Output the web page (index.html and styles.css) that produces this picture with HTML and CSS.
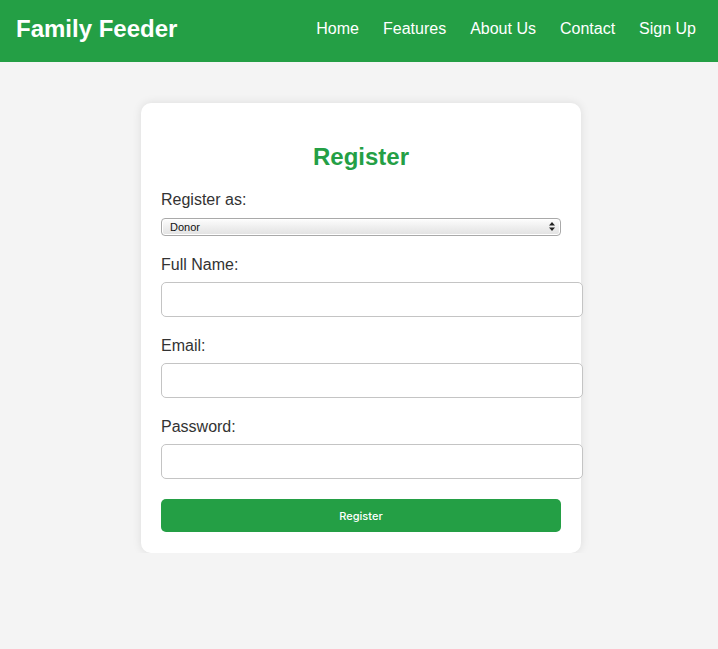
FILE: index.html
```html
<!DOCTYPE html>
<html lang="en">
<head>
<meta charset="utf-8">
<title>Family Feeder - Register</title>
<link rel="stylesheet" href="styles.css">
</head>
<body>
<header class="topbar">
  <div class="brand">Family Feeder</div>
  <nav class="nav">
    <a href="#">Home</a>
    <a href="#">Features</a>
    <a href="#">About Us</a>
    <a href="#">Contact</a>
    <a href="#">Sign Up</a>
  </nav>
</header>
<main class="page">
  <div class="card">
    <h2 class="title">Register</h2>
    <form class="form">
      <label class="label">Register as:</label>
      <div class="select-wrap">
        <select class="select">
          <option>Donor</option>
          <option>Recipient</option>
        </select>
        <svg class="select-arrows" width="6" height="9" viewBox="0 0 6 9"><path d="M0 3.5 L3 0 L6 3.5 Z M0 5.5 L3 9 L6 5.5 Z" fill="#222"/></svg>
      </div>
      <label class="label">Full Name:</label>
      <input class="input" type="text">
      <label class="label">Email:</label>
      <input class="input" type="email">
      <label class="label">Password:</label>
      <input class="input" type="password">
      <button class="btn" type="button">Register</button>
    </form>
  </div>
</main>
</body>
</html>
```
FILE: styles.css
```css
* { margin: 0; padding: 0; }
body {
  background: #f4f4f4;
  font-family: "Liberation Sans", Arial, sans-serif;
  color: #333;
}
.topbar {
  height: 62px;
  background: #249f45;
  display: flex;
  align-items: center;
  justify-content: space-between;
  padding: 0 22px 0 16px;
  box-sizing: border-box;
  color: #fff;
}
.brand {
  font-size: 24px;
  font-weight: bold;
  margin-top: -4px;
}
.nav {
  display: flex;
  gap: 24px;
  margin-top: -5px;
}
.nav a {
  color: #fff;
  text-decoration: none;
  font-size: 16px;
}
.page {
  display: flex;
  justify-content: center;
  padding: 41px 0 0 4px;
}
.card {
  width: 440px;
  box-sizing: border-box;
  background: #fff;
  border-radius: 10px;
  padding: 20px 20px 21px;
  box-shadow: 0 0 10px rgba(0,0,0,0.1);
}
.title {
  color: #249f45;
  text-align: center;
  font-size: 24px;
  line-height: 28px;
  margin: 20px 0 20px;
}
.form { display: flex; flex-direction: column; }
.label {
  display: block;
  font-size: 16px;
  line-height: 18px;
  margin-bottom: 8px;
}
.select-wrap {
  position: relative;
  margin-bottom: 20px;
}
.select {
  appearance: none;
  -webkit-appearance: none;
  width: 400px;
  height: 18px;
  box-sizing: border-box;
  border: 1px solid #a9a9a9;
  border-radius: 4px;
  background: linear-gradient(#fdfdfd, #ececec 60%, #e2e2e2);
  font-family: "Liberation Sans", Arial, sans-serif;
  font-size: 11px;
  color: #111;
  padding: 0 0 0 8px;
  box-shadow: inset 0 0 0 1px #fff;
}
.select-arrows {
  position: absolute;
  right: 6px;
  top: 5px;
  pointer-events: none;
}
.input {
  width: 400px;
  height: 15px;
  padding: 9px 10px;
  border: 1px solid #c4c4c4;
  border-radius: 5px;
  background: #fff;
  font-size: 13px;
  margin-bottom: 20px;
  outline: none;
}
.btn {
  width: 400px;
  height: 33px;
  border: none;
  border-radius: 5px;
  background: #249f45;
  color: #fff;
  font-family: Inter, "Liberation Sans", sans-serif;
  font-size: 11px;
  font-weight: 500;
  cursor: pointer;
}
```
